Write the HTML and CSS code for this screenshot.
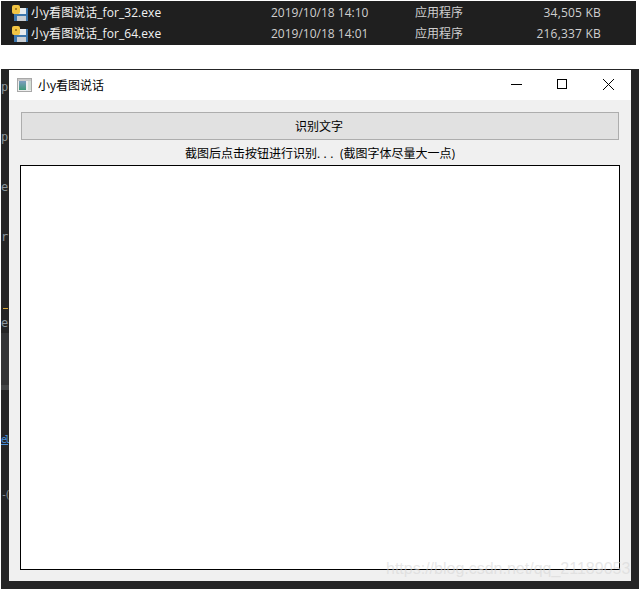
FILE: index.html
```html
<!DOCTYPE html>
<html lang="en">
<head>
    <meta charset="UTF-8">
    <title>小y看图说话</title>
    <link rel="stylesheet" href="styles.css">
</head>
<body>
    <div class="files">
        <div class="file-row">
            <svg class="file-icon" viewBox="0 0 16 16"><use href="#floppy"/></svg>
            <span class="file-name">小y看图说话_for_32.exe</span>
            <span class="file-date">2019/10/18 14:10</span>
            <span class="file-type">应用程序</span>
            <span class="file-size">34,505 KB</span>
        </div>
        <div class="file-row">
            <svg class="file-icon" viewBox="0 0 16 16"><use href="#floppy"/></svg>
            <span class="file-name">小y看图说话_for_64.exe</span>
            <span class="file-date">2019/10/18 14:01</span>
            <span class="file-type">应用程序</span>
            <span class="file-size">216,337 KB</span>
        </div>
    </div>

    <div class="desk">
        <div class="gutter">
            <span class="code c1">p</span>
            <span class="code c2">p</span>
            <span class="code c3">e</span>
            <span class="code c4">r</span>
            <span class="mark"></span>
            <span class="code c5">e</span>
            <span class="band"></span>
            <span class="code c6">el</span>
            <span class="code c7">-(</span>
        </div>
        <div class="window">
            <div class="titlebar">
                <svg class="app-icon" viewBox="0 0 15 14">
                    <defs>
                        <linearGradient id="pane" x1="0" y1="0" x2="0" y2="1">
                            <stop offset="0" stop-color="#7d9cc0"/>
                            <stop offset="1" stop-color="#3f9a78"/>
                        </linearGradient>
                    </defs>
                    <rect x="0.5" y="0.5" width="14" height="13" fill="#eeeeee" stroke="#a8a8a8"/>
                    <rect x="1" y="1" width="13" height="2" fill="#c9c9c9"/>
                    <rect x="2" y="3" width="7" height="9" fill="url(#pane)"/>
                    <rect x="11" y="3" width="3" height="9" fill="#d3dfd6"/>
                </svg>
                <span class="title">小y看图说话</span>
                <div class="controls">
                    <svg class="ctl" viewBox="0 0 46 30"><path d="M18 14.5h11" stroke="#000" fill="none"/></svg>
                    <svg class="ctl" viewBox="0 0 46 30"><rect x="18.5" y="9.5" width="9" height="9" stroke="#000" fill="none"/></svg>
                    <svg class="ctl" viewBox="0 0 46 30"><path d="M18 9l11 11M29 9l-11 11" stroke="#000" fill="none"/></svg>
                </div>
            </div>
            <div class="content">
                <button class="btn1">识别文字</button>
                <div class="hint">截图后点击按钮进行识别<span class="dots">...</span>(截图字体尽量大一点)</div>
                <div class="result"></div>
            </div>
        </div>
    </div>

    <div class="watermark">https://blog.csdn.net/qq_21189053</div>

    <svg class="defs" width="0" height="0">
        <symbol id="floppy" viewBox="0 0 16 16">
            <rect x="2" y="3" width="14" height="13" fill="#3c76ad"/>
            <rect x="5" y="3" width="9" height="6" fill="#e8ecef"/>
            <rect x="5" y="11" width="9" height="5" fill="#c9ced3"/>
            <path d="M0 2Q0 0 2 0h4q2 0 2 2v5q0 2-2 2H2Q0 9 0 7z" fill="#f2c544"/>
            <rect x="3" y="3" width="2" height="2" fill="#a57f20"/>
        </symbol>
    </svg>
</body>
</html>
```

FILE: styles.css
```css
html, body {
    margin: 0;
    height: 589px;
    overflow: hidden;
    background-color: white;
}

body {
    position: relative;
    padding: 1px 0 0 1px;
    box-sizing: border-box;
    font-family: "Open Sans", "Noto Sans CJK SC", sans-serif;
    font-size: 12px;
    color: black;
}

/* explorer rows at the top */
.files {
    width: 635px;
    height: 44px;
    padding-top: 2px;
    box-sizing: border-box;
    background-color: #1f1f1f;
    color: #e4e4e4;
}

.file-row {
    display: grid;
    grid-template-columns: 11px 16px 243px 144px 96px 90px;
    height: 20px;
    align-items: center;
    line-height: 20px;
}

.file-row + .file-row {
    padding-top: 1px;
}

.file-icon {
    grid-column: 2;
    width: 16px;
    height: 16px;
}

.file-name {
    grid-column: 3;
    padding-left: 3px;
    color: #f2f2f2;
    letter-spacing: 0.05px;
}

.file-date, .file-type, .file-size {
    color: #cfcfcf;
}

.file-size {
    text-align: right;
    letter-spacing: 0.2px;
}

.defs {
    position: absolute;
}

/* dark editor behind the window */
.desk {
    display: flex;
    height: 520px;
    margin-top: 24px;
    background-color: #252526;
    border-top: 1px solid #252526;
    box-sizing: border-box;
}

.gutter {
    position: relative;
    width: 8px;
    height: 100%;
    overflow: hidden;
}

.code {
    position: absolute;
    left: 0;
    font-family: "DejaVu Sans Mono", monospace;
    font-size: 12px;
    line-height: 14px;
    color: #8c969d;
    white-space: nowrap;
}

.c1 { top: 10px; }
.c2 { top: 60px; }
.c3 { top: 110px; }
.c4 { top: 160px; }
.c5 { top: 246px; }
.c6 { top: 363px; font-size: 10px; letter-spacing: -2.5px; color: #4a90d9; text-decoration: underline; }
.c7 { top: 418px; font-size: 10px; letter-spacing: -2.5px; }

.mark {
    position: absolute;
    top: 238px;
    left: 2px;
    width: 5px;
    height: 1px;
    background-color: #d8a93a;
}

.band {
    position: absolute;
    top: 263px;
    left: 0;
    width: 8px;
    height: 52px;
    background-color: #333436;
    border-bottom: 5px solid #434547;
}

.window {
    width: 622px;
    height: 511px;
    display: flex;
    flex-direction: column;
    background-color: #f0f0f0;
}

.titlebar {
    display: flex;
    align-items: center;
    height: 30px;
    background-color: white;
    padding-left: 8px;
}

.app-icon {
    width: 15px;
    height: 14px;
}

.title {
    margin-left: 6px;
}

.controls {
    display: flex;
    margin-left: auto;
}

.ctl {
    width: 46px;
    height: 30px;
}

.content {
    display: flex;
    flex-direction: column;
    padding: 12px 11px 0 11px;
}

.btn1 {
    height: 28px;
    margin: 0 1px;
    padding: 0 2px 0 0;
    font-family: inherit;
    font-size: 12px;
    background-color: #e1e1e1;
    border: 1px solid #adadad;
}

.hint {
    height: 25px;
    line-height: 27px;
    text-align: center;
    white-space: nowrap;
}

.dots {
    letter-spacing: 3.5px;
    margin-right: 3px;
}

.result {
    height: 403px;
    background-color: white;
    border: 1px solid black;
}

.watermark {
    position: absolute;
    top: 560px;
    left: 386px;
    font-family: "Liberation Sans", sans-serif;
    font-size: 16px;
    line-height: 18px;
    color: rgba(215, 215, 215, 0.6);
    white-space: nowrap;
}
```
